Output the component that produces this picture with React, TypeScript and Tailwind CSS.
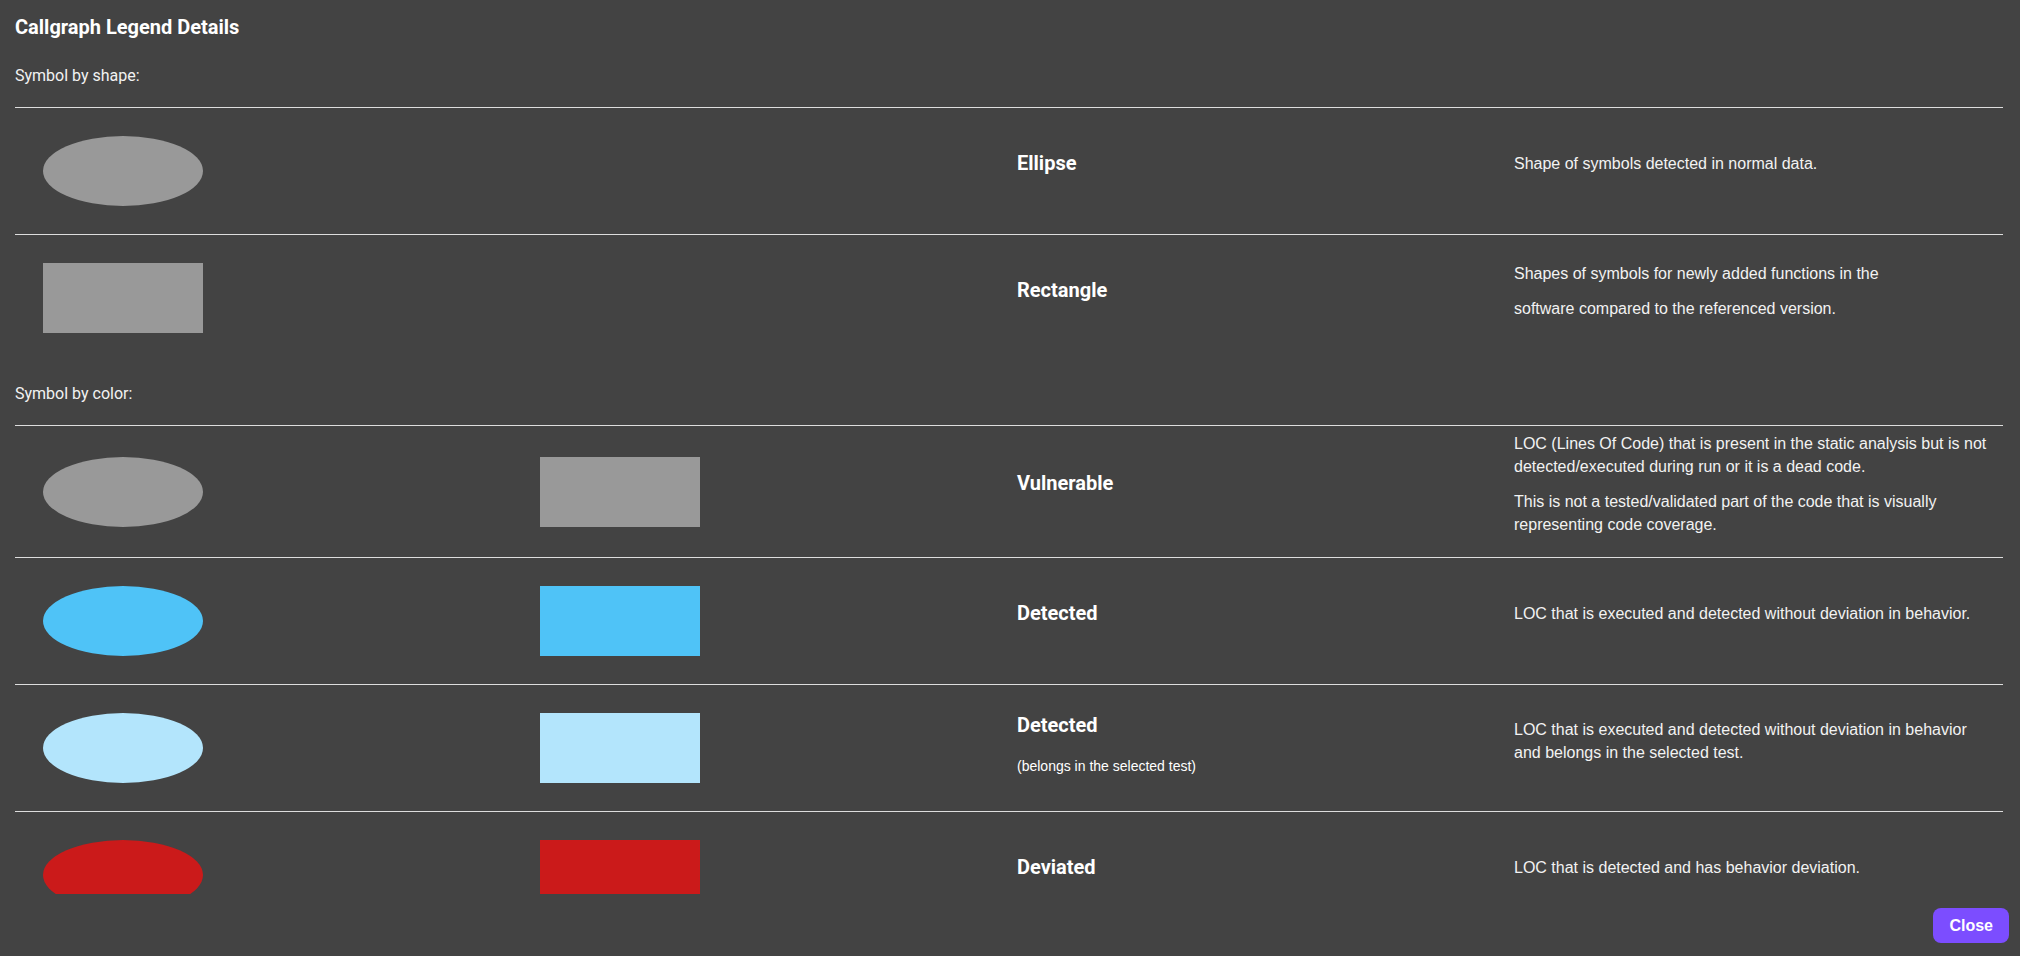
import React from "react";

type Shape = "ellipse" | "rect";

const shapeRows = [
  {
    shape: "ellipse" as Shape,
    label: "Ellipse",
    text: ["Shape of symbols detected in normal data."],
  },
  {
    shape: "rect" as Shape,
    label: "Rectangle",
    text: [
      "Shapes of symbols for newly added functions in the",
      "software compared to the referenced version.",
    ],
  },
];

const colorRows = [
  {
    color: "bg-[#999999]",
    label: "Vulnerable",
    text: [
      "LOC (Lines Of Code) that is present in the static analysis but is not detected/executed during run or it is a dead code.",
      "This is not a tested/validated part of the code that is visually representing code coverage.",
    ],
  },
  {
    color: "bg-[#4fc3f7]",
    label: "Detected",
    text: ["LOC that is executed and detected without deviation in behavior."],
  },
  {
    color: "bg-[#b3e5fc]",
    label: "Detected",
    sub: "(belongs in the selected test)",
    text: ["LOC that is executed and detected without deviation in behavior and belongs in the selected test."],
  },
  {
    color: "bg-[#cb1a1a]",
    label: "Deviated",
    text: ["LOC that is detected and has behavior deviation."],
  },
];

const Symbol = ({ shape, color }: { shape: Shape; color: string }) => (
  <div
    className={`m-5 h-[70px] w-[160px] ${color} ${shape === "ellipse" ? "rounded-[50%]" : ""}`}
  />
);

const LabelCell = ({ label, sub }: { label: string; sub?: string }) => (
  <div className="p-2">
    <h3 className="mb-[17px] font-['Roboto',sans-serif] text-[20px] leading-[24px] font-bold text-white">
      {label}
    </h3>
    {sub && (
      <p className="mb-[5px] font-['Liberation_Sans',Arial,sans-serif] text-[14px] leading-[25px] text-white">
        {sub}
      </p>
    )}
  </div>
);

const DescCell = ({ text }: { text: string[] }) => (
  <div className="px-2 pt-[6px] pb-[7px]">
    {text.map((t, i) => (
      <p
        key={i}
        className="mb-3 font-['Liberation_Sans',Arial,sans-serif] text-[16px] leading-[23px] text-[#f2f2f2] last:mb-[14px]"
      >
        {t}
      </p>
    ))}
  </div>
);

const SectionTitle = ({ children }: { children: React.ReactNode }) => (
  <p className="mb-[19px] font-['Roboto',sans-serif] text-[16px] leading-[24px] text-[#f2f2f2]">
    {children}
  </p>
);

export default function App() {
  return (
    <div className="flex h-[956px] flex-col bg-[#434343]">
      <div className="h-[894px] overflow-hidden pt-[15px] pr-[17px] pl-[15px]">
        <h2 className="mb-[25px] font-['Roboto',sans-serif] text-[20px] leading-[24px] font-bold text-white">
          Callgraph Legend Details
        </h2>

        <SectionTitle>Symbol by shape:</SectionTitle>
        <div className="mb-[21px]">
          {shapeRows.map((row) => (
            <div key={row.label} className="grid grid-cols-4 items-center border-t border-[#dddddd]">
              <div className="p-2">
                <Symbol shape={row.shape} color="bg-[#999999]" />
              </div>
              <div />
              <LabelCell label={row.label} />
              <DescCell text={row.text} />
            </div>
          ))}
        </div>

        <SectionTitle>Symbol by color:</SectionTitle>
        <div>
          {colorRows.map((row, i) => (
            <div key={i} className="grid grid-cols-4 items-center border-t border-[#dddddd]">
              <div className="p-2">
                <Symbol shape="ellipse" color={row.color} />
              </div>
              <div className="p-2">
                <Symbol shape="rect" color={row.color} />
              </div>
              <LabelCell label={row.label} sub={row.sub} />
              <DescCell text={row.text} />
            </div>
          ))}
        </div>
      </div>

      <div className="flex justify-end pt-[14px] pr-[11px]">
        <button className="h-[35px] rounded-lg bg-[#7c4dff] px-4 font-['Liberation_Sans',Arial,sans-serif] text-[16px] font-bold text-white">
          Close
        </button>
      </div>
    </div>
  );
}
